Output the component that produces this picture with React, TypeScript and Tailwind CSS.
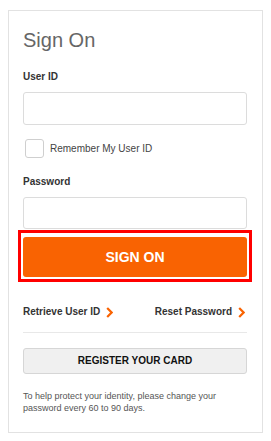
import React from "react";

function Chevron() {
  return (
    <svg width="7" height="11" viewBox="0 0 7 11" className="ml-[6px] shrink-0">
      <polyline points="1.2,1 5.6,5.5 1.2,10" fill="none" stroke="#f96302" strokeWidth="2.2" strokeLinejoin="miter" />
    </svg>
  );
}

export default function App() {
  return (
    <div className="bg-white min-h-[441px] pt-[10px] pl-2 font-['Liberation_Sans',Arial,sans-serif]">
      <div className="w-[255px] border border-[#e2e2e2] pl-[14px] pr-[15px] pt-[17px] pb-[18px]">
        <div className="text-[20px] leading-[24px] text-[#666]">Sign On</div>

        <div className="mt-[19px] text-[10px] font-bold leading-[12px] text-[#333]">User ID</div>
        <div className="mt-[9px] h-[33px] w-full border border-[#dcdcdc] rounded-[3px] bg-white" />

        <div className="mt-[14px] flex items-center pl-[2px]">
          <div className="w-[19px] h-[19px] border border-[#cfcfcf] rounded-[3px] bg-white" />
          <span className="ml-[6px] text-[10px] leading-[12px] text-[#444]">Remember My User ID</span>
        </div>

        <div className="mt-[18px] text-[10px] font-bold leading-[12px] text-[#333]">Password</div>
        <div className="mt-[9px] h-[32px] w-full border border-[#dcdcdc] rounded-[3px] bg-white" />

        <div className="relative mt-[8px]">
          <div className="h-[40px] w-full bg-[#f96302] rounded-[3px] flex items-center justify-center text-white font-bold text-[14px] leading-none">
            SIGN ON
          </div>
          <div className="absolute -top-[7px] -bottom-[5px] -left-[5px] -right-[5px] border-[3px] border-[#ff0000] pointer-events-none" />
        </div>

        <div className="mt-[29px] flex items-center justify-between text-[10px] font-bold leading-[12px] text-[#333]">
          <div className="flex items-center">
            <span>Retrieve User ID</span>
            <Chevron />
          </div>
          <div className="flex items-center pr-[2px]">
            <span>Reset Password</span>
            <Chevron />
          </div>
        </div>

        <div className="mt-[14px] h-px bg-[#e8e8e8]" />

        <div className="mt-[15px] h-[26px] w-full bg-[#f0f0f0] border border-[#d6d6d6] rounded-[3px] flex items-center justify-center text-[10px] font-bold text-[#111] leading-none">
          REGISTER YOUR CARD
        </div>

        <div className="mt-[16px] text-[9px] leading-[12px] text-[#555]">
          To help protect your identity, please change your password every 60 to 90 days.
        </div>
      </div>
    </div>
  );
}
